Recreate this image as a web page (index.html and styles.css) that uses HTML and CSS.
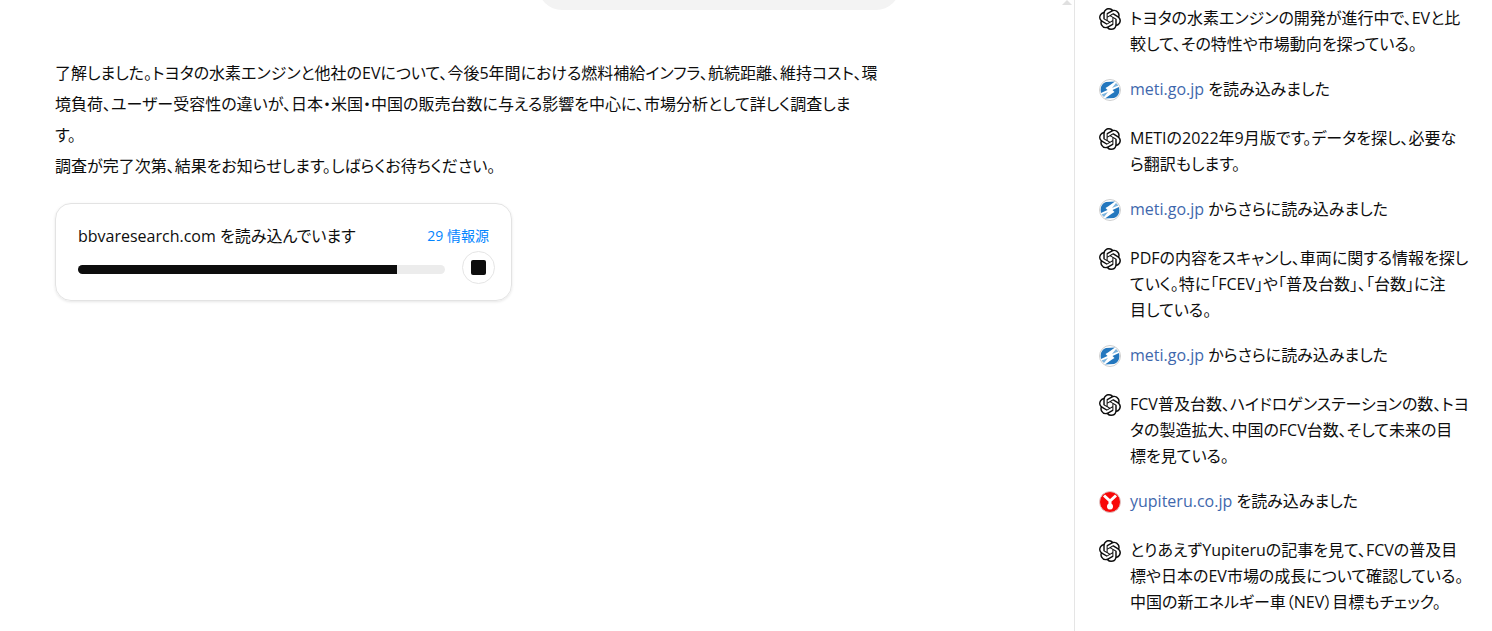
FILE: index.html
```html
<!DOCTYPE html>
<html lang="ja">
<head>
<meta charset="utf-8">
<title>リサーチ</title>
<link rel="stylesheet" href="styles.css">
</head>
<body>
<svg class="defs" aria-hidden="true">
  <symbol id="gpt" viewBox="0 0 24 24"><path fill="currentColor" d="M22.2819 9.8211a5.9847 5.9847 0 0 0-.5157-4.9108 6.0462 6.0462 0 0 0-6.5098-2.9A6.0651 6.0651 0 0 0 4.9807 4.1818a5.9847 5.9847 0 0 0-3.9977 2.9 6.0462 6.0462 0 0 0 .7427 7.0966 5.98 5.98 0 0 0 .511 4.9107 6.051 6.051 0 0 0 6.5146 2.9001A5.9847 5.9847 0 0 0 13.2599 24a6.0557 6.0557 0 0 0 5.7718-4.2058 5.9894 5.9894 0 0 0 3.9977-2.9001 6.0557 6.0557 0 0 0-.7475-7.0729zm-9.022 12.6081a4.4755 4.4755 0 0 1-2.8764-1.0408l.1419-.0804 4.7783-2.7582a.7948.7948 0 0 0 .3927-.6813v-6.7369l2.02 1.1686a.071.071 0 0 1 .038.052v5.5826a4.504 4.504 0 0 1-4.4945 4.4944zm-9.6607-4.1254a4.4708 4.4708 0 0 1-.5346-3.0137l.142.0852 4.783 2.7582a.7712.7712 0 0 0 .7806 0l5.8428-3.3685v2.3324a.0804.0804 0 0 1-.0332.0615L9.74 19.9502a4.4992 4.4992 0 0 1-6.1408-1.6464zM2.3408 7.8956a4.485 4.485 0 0 1 2.3655-1.9728V11.6a.7664.7664 0 0 0 .3879.6765l5.8144 3.3543-2.0201 1.1685a.0757.0757 0 0 1-.071 0l-4.8303-2.7865A4.504 4.504 0 0 1 2.3408 7.872zm16.5963 3.8558L13.1038 8.364 15.1192 7.2a.0757.0757 0 0 1 .071 0l4.8303 2.7913a4.4944 4.4944 0 0 1-.6765 8.1042v-5.6772a.79.79 0 0 0-.407-.667zm2.0107-3.0231l-.142-.0852-4.7735-2.7818a.7759.7759 0 0 0-.7854 0L9.409 9.2297V6.8974a.0662.0662 0 0 1 .0284-.0615l4.8303-2.7866a4.4992 4.4992 0 0 1 6.6802 4.66zM8.3065 12.863l-2.02-1.1638a.0804.0804 0 0 1-.038-.0567V6.0742a4.4992 4.4992 0 0 1 7.3757-3.4537l-.142.0805L8.704 5.459a.7948.7948 0 0 0-.3927.6813zm1.0976-2.3654l2.602-1.4998 2.6069 1.4998v2.9994l-2.5974 1.4997-2.6067-1.4997Z"/></symbol>
  <symbol id="meti" viewBox="0 0 22 22">
    <circle cx="11" cy="11" r="10.5" fill="#fff" stroke="#cfcfcf"/>
    <path fill="#2377be" d="M2 8Q3.500 4 7 3L16 2.500 9 7.500 6.500 9 8.500 11 2 14Q1.200 11 2 8zM20 8Q20.800 11 20 14 18.500 18 15 19L6 19.500 13 14.500 15.500 13 13.500 11z"/>
    <path fill="#7db4de" d="M17 4 19.500 6.500 13 9zM2.500 15.500 9 13 5 18z"/>
  </symbol>
  <symbol id="yupiteru" viewBox="0 0 22 22">
    <circle cx="11" cy="11" r="10.5" fill="#f80808" stroke="#dfc4c4"/>
    <path d="M5 4.500 11 10 17 4.500M11 9v4" fill="none" stroke="#fff" stroke-width="3"/>
    <circle cx="11" cy="15.500" r="3" fill="#fff"/>
  </symbol>
</svg>
<div class="app">
  <main class="chat">
    <div class="scroll-up"></div>
    <div class="thread">
      <div class="bubble"></div>
      <div class="reply">
        <p>了解しました。トヨタの水素エンジンと他社のEVについて、今後5年間における燃料補給インフラ、航続距離、維持コスト、環<br>境負荷、ユーザー受容性の違いが、日本・米国・中国の販売台数に与える影響を中心に、市場分析として詳しく調査しま<br>す。</p>
        <p>調査が完了次第、結果をお知らせします。しばらくお待ちください。</p>
      </div>
      <section class="card">
        <div class="card-head">
          <span>bbvaresearch.com を読み込んでいます</span>
          <a class="sources" href="#sources">29 情報源</a>
        </div>
        <div class="card-progress">
          <div class="track" role="progressbar" aria-label="進捗" aria-valuenow="87" aria-valuemin="0" aria-valuemax="100"><div class="fill" style="width: 87%"></div></div>
          <button class="stop" type="button" aria-label="停止"><span class="stop-mark"></span></button>
        </div>
      </section>
    </div>
  </main>
  <aside class="activity">
    <div class="item"><svg class="icon"><use href="#gpt"/></svg><p>トヨタの水素エンジンの開発が進行中で、EVと比<br>較して、その特性や市場動向を探っている。</p></div>
    <div class="item visit"><svg class="icon"><use href="#meti"/></svg><p><a href="#meti-1">meti.go.jp</a> を読み込みました</p></div>
    <div class="item"><svg class="icon"><use href="#gpt"/></svg><p>METIの2022年9月版です。データを探し、必要な<br>ら翻訳もします。</p></div>
    <div class="item visit"><svg class="icon"><use href="#meti"/></svg><p><a href="#meti-2">meti.go.jp</a> からさらに読み込みました</p></div>
    <div class="item"><svg class="icon"><use href="#gpt"/></svg><p>PDFの内容をスキャンし、車両に関する情報を探し<br>ていく。特に「FCEV」や「普及台数」、「台数」に注<br>目している。</p></div>
    <div class="item visit"><svg class="icon"><use href="#meti"/></svg><p><a href="#meti-3">meti.go.jp</a> からさらに読み込みました</p></div>
    <div class="item"><svg class="icon"><use href="#gpt"/></svg><p>FCV普及台数、ハイドロゲンステーションの数、トヨ<br>タの製造拡大、中国のFCV台数、そして未来の目<br>標を見ている。</p></div>
    <div class="item visit"><svg class="icon"><use href="#yupiteru"/></svg><p><a href="#yupiteru-1">yupiteru.co.jp</a> を読み込みました</p></div>
    <div class="item"><svg class="icon"><use href="#gpt"/></svg><p>とりあえずYupiteruの記事を見て、FCVの普及目<br>標や日本のEV市場の成長について確認している。<br>中国の新エネルギー車（NEV）目標もチェック。</p></div>
  </aside>
</div>
</body>
</html>
```
FILE: styles.css
```css
* { box-sizing: border-box; }
body {
  margin: 0;
  background: #fff;
  color: #0d0d0d;
  font: 16px/26px "Open Sans", "Noto Sans CJK JP", sans-serif;
  font-feature-settings: "palt";
}
p { margin: 0; white-space: nowrap; }
a { text-decoration: none; }
.defs { position: absolute; width: 0; height: 0; }
.app { display: flex; height: 100vh; overflow: hidden; }
.chat { position: relative; flex: 1; min-width: 0; overflow: hidden; padding: 0 174px 0 55px; }
.scroll-up {
  position: absolute;
  top: 0;
  right: 2px;
  border: 5px solid transparent;
  border-top: 0;
  border-bottom-color: #e0e0e0;
}
.thread { display: flex; flex-direction: column; }
.bubble {
  align-self: flex-end;
  width: 362px;
  height: 48px;
  margin-top: -38px;
  border-radius: 24px;
  background: #f3f3f3;
}
.reply { margin-top: 48px; line-height: 31px; }
.card {
  width: 457px;
  max-width: 100%;
  margin-top: 21px;
  padding: 19px 16px 16px 22px;
  border: 1px solid #e3e3e3;
  border-radius: 16px;
  box-shadow: 0 1px 3px rgba(0, 0, 0, .1);
}
.card-head { display: flex; justify-content: space-between; padding-right: 6px; }
.sources { color: #0285ff; font-size: 14px; }
.card-progress { display: flex; align-items: center; gap: 17px; margin-top: 2px; }
.track { flex: 1; height: 9px; margin-top: 4px; border-radius: 5px; background: #ececec; overflow: hidden; }
.fill { height: 100%; background: #0d0d0d; }
.stop {
  display: grid;
  place-items: center;
  width: 33px;
  height: 33px;
  padding: 0;
  border: 1px solid #e5e5e5;
  border-radius: 50%;
  background: #fff;
}
.stop-mark { width: 15px; height: 15px; border-radius: 2px; background: #0d0d0d; }
.activity { width: 418px; flex: none; padding: 5px 16px 0 24px; border-left: 1px solid #e5e5e5; }
.item { display: flex; gap: 9px; }
.icon { flex: none; width: 22px; height: 22px; margin-top: 3px; }
.visit { margin: 19px 0 23px; }
.visit a { color: #3f68ad; }
```
